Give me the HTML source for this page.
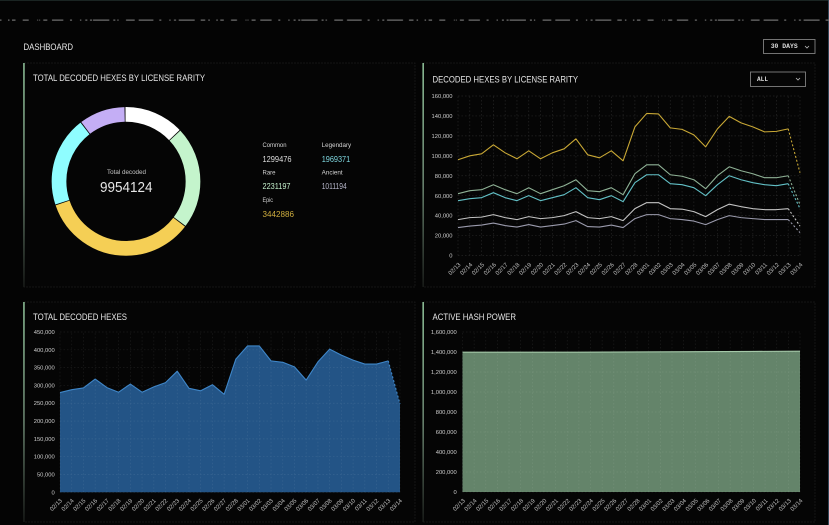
<!DOCTYPE html>
<html><head><meta charset="utf-8"><title>Dashboard</title>
<style>
html,body{margin:0;padding:0;background:#040404;width:829px;height:525px;overflow:hidden}
svg{display:block;filter:blur(.35px)}
text{font-family:"Liberation Sans",sans-serif}
.t{fill:#e6e6e6;font-size:9px}
.y{fill:#cfcfcf;font-size:5.800px;text-anchor:end}
.x{fill:#c4c4c4;font-size:5.900px;text-anchor:end}
.l{fill:#d4d4d4;font-size:6.200px}
.v{font-size:8.400px}
.g{fill:none;stroke:rgba(255,255,255,.13);stroke-width:.7;stroke-dasharray:1.5 2;vector-effect:non-scaling-stroke}
.s{fill:none;stroke-width:1.1;vector-effect:non-scaling-stroke;stroke-linejoin:round}
.d{stroke-dasharray:2 2}
</style></head><body>
<svg width="829" height="525" viewBox="0 0 829 525" xmlns="http://www.w3.org/2000/svg">
<defs>
<linearGradient id="a" x1="0" y1="0" x2="0" y2="1"><stop offset="0" stop-color="#a8e4b4"/><stop offset=".55" stop-color="#7d9c84"/><stop offset="1" stop-color="#1c1f1c"/></linearGradient>
<pattern id="dash" width="208.3" height="2" patternUnits="userSpaceOnUse" y="19.5">
<path fill="#6e6e6e" d="M0 0h1.500v1.200H0zM8 0h1.500v1.200H8zM12 0h3.500v1.200H12zM22.700 0h6v1.200h-6zM37.300 0h.8v1.200h-.8zM39.300 0h.8v1.200h-.8zM43.300 0h4v1.200h-4zM52 0h11.300v1.200H52zM70 0h2v1.200h-2zM80 0h1.300v1.200H80zM85.300 0h2v1.200h-2zM90 0h2v1.200h-2zM93 0h16.300v1.200H93zM113.300 0h2v1.200h-2zM117.300 0h1.300v1.200h-1.300zM126 0h8.700v1.200H126zM138.700 0h14.700v1.200h-14.700zM159.300 0h2v1.200h-2zM169.300 0h1.300v1.200h-1.300zM174 0h2v1.200h-2zM178.700 0h16v1.200h-16zM200.700 0h4.500v1.200h-4.500z"/>
</pattern>
</defs>
<rect width="829" height="525" fill="#040404"/>
<rect x="0" y="0" width="829" height="1" fill="#1a2422"/>
<rect x="828" y="0" width="1" height="525" fill="#33485a"/>
<rect x="0" y="19.500" width="829" height="2" fill="url(#dash)"/>

<text class="t" x="23.500" y="49.800" textLength="49.500" lengthAdjust="spacingAndGlyphs">DASHBOARD</text>

<rect x="763.500" y="39.500" width="51.500" height="14" fill="none" stroke="#808080" stroke-width=".9"/>
<text x="770.700" y="48.200" textLength="27" lengthAdjust="spacingAndGlyphs" style="font-family:'Liberation Mono',monospace;font-size:6.600px;font-weight:700;fill:#dcdcdc">30 DAYS</text>
<path d="M805 46l2 2 2-2" fill="none" stroke="#bbb" stroke-width=".8"/>

<rect x="24" y="63" width="391" height="224" fill="#050505" stroke="#1b1b1b" stroke-width=".8" stroke-dasharray="2 1"/>
<rect x="423" y="63" width="392" height="224" fill="#050505" stroke="#1b1b1b" stroke-width=".8" stroke-dasharray="2 1"/>
<rect x="24" y="302" width="391" height="220" fill="#050505" stroke="#1b1b1b" stroke-width=".8" stroke-dasharray="2 1"/>
<rect x="423" y="302" width="392" height="220" fill="#050505" stroke="#1b1b1b" stroke-width=".8" stroke-dasharray="2 1"/>
<rect x="23.300" y="63" width="1.300" height="224" fill="url(#a)"/>
<rect x="422.500" y="63" width="1.300" height="224" fill="url(#a)"/>
<rect x="23.300" y="302" width="1.300" height="220" fill="url(#a)"/>
<rect x="422.500" y="302" width="1.300" height="220" fill="url(#a)"/>

<text class="t" x="33" y="81" textLength="172" lengthAdjust="spacingAndGlyphs">TOTAL DECODED HEXES BY LICENSE RARITY</text>
<text class="t" x="432.500" y="82.300" textLength="145.500" lengthAdjust="spacingAndGlyphs">DECODED HEXES BY LICENSE RARITY</text>
<text class="t" x="33" y="320" textLength="94" lengthAdjust="spacingAndGlyphs">TOTAL DECODED HEXES</text>
<text class="t" x="432.500" y="320" textLength="83.500" lengthAdjust="spacingAndGlyphs">ACTIVE HASH POWER</text>

<rect x="750.500" y="72" width="55" height="14.500" fill="none" stroke="#808080" stroke-width=".9"/>
<text x="757" y="81" textLength="11" lengthAdjust="spacingAndGlyphs" style="font-family:'Liberation Mono',monospace;font-size:6.600px;font-weight:700;fill:#dcdcdc">ALL</text>
<path d="M796 78l2 2 2-2" fill="none" stroke="#bbb" stroke-width=".8"/>

<!-- donut -->
<g transform="rotate(-90 126 181.400)" fill="none" stroke-width="14.700">
<circle cx="126" cy="181.400" r="67" pathLength="100" stroke="#ffffff" stroke-dasharray="12.85 87.15" stroke-dashoffset="0"/>
<circle cx="126" cy="181.400" r="67" pathLength="100" stroke="#c4f4cc" stroke-dasharray="22.21 77.79" stroke-dashoffset="-13.05"/>
<circle cx="126" cy="181.400" r="67" pathLength="100" stroke="#f5cf55" stroke-dasharray="34.39 65.61" stroke-dashoffset="-35.46"/>
<circle cx="126" cy="181.400" r="67" pathLength="100" stroke="#8ffdff" stroke-dasharray="19.58 80.42" stroke-dashoffset="-70.05"/>
<circle cx="126" cy="181.400" r="67" pathLength="100" stroke="#c4aef5" stroke-dasharray="9.96 90.04" stroke-dashoffset="-89.83"/>
</g>
<text x="107" y="174" textLength="39" lengthAdjust="spacingAndGlyphs" style="font-size:6.200px;fill:#c4c4c4">Total decoded</text>
<text x="100" y="192" textLength="52.500" lengthAdjust="spacingAndGlyphs" style="font-size:15px;fill:#e6e6e6">9954124</text>

<text class="l" x="262.500" y="147.200" textLength="24" lengthAdjust="spacingAndGlyphs">Common</text>
<text class="v" x="262.500" y="161.800" textLength="29" lengthAdjust="spacingAndGlyphs" fill="#dedede">1299476</text>
<text class="l" x="262.500" y="174.500" textLength="13" lengthAdjust="spacingAndGlyphs">Rare</text>
<text class="v" x="262.500" y="189" textLength="28" lengthAdjust="spacingAndGlyphs" fill="#c4f0cc">2231197</text>
<text class="l" x="262.500" y="202.200" textLength="10.500" lengthAdjust="spacingAndGlyphs">Epic</text>
<text class="v" x="262.500" y="217" textLength="31.500" lengthAdjust="spacingAndGlyphs" fill="#cfae3f">3442886</text>
<text class="l" x="321.700" y="147.200" textLength="29.500" lengthAdjust="spacingAndGlyphs">Legendary</text>
<text class="v" x="321.700" y="161.800" textLength="28.500" lengthAdjust="spacingAndGlyphs" fill="#7fd8e0">1969371</text>
<text class="l" x="321.700" y="174.500" textLength="21" lengthAdjust="spacingAndGlyphs">Ancient</text>
<text class="v" x="321.700" y="189" textLength="25" lengthAdjust="spacingAndGlyphs" fill="#b5b5c8">1011194</text>

<!-- chart 2 -->
<g transform="translate(458,255.500) scale(11.793,-.997)">
<path class="g" d="M0 0V160M1 0V160M2 0V160M3 0V160M4 0V160M5 0V160M6 0V160M7 0V160M8 0V160M9 0V160M10 0V160M11 0V160M12 0V160M13 0V160M14 0V160M15 0V160M16 0V160M17 0V160M18 0V160M19 0V160M20 0V160M21 0V160M22 0V160M23 0V160M24 0V160M25 0V160M26 0V160M27 0V160M28 0V160M29 0V160M0 0H29M0 20H29M0 40H29M0 60H29M0 80H29M0 100H29M0 120H29M0 140H29M0 160H29"/>
<polyline class="s" stroke="#c9a835" points="0,96 1,100 2,102 3,111 4,103 5,97 6,105 7,97 8,103 9,107 10,117 11,101 12,98 13,105 14,95 15,129 16,142.500 17,142 18,128 19,126.500 20,121 21,109 22,127 23,139.500 24,133 25,129 26,124 27,124.500 28,127"/>
<polyline class="s d" stroke="#c9a835" points="28,127 29,83"/>
<polyline class="s" stroke="#8fb296" points="0,62 1,65 2,66 3,71 4,66 5,62 6,68 7,62 8,66 9,70 10,76 11,65 12,64 13,68 14,61 15,82 16,91 17,91 18,81 19,79.500 20,76 21,67 22,80 23,89 24,85 25,82 26,78 27,78 28,80"/>
<polyline class="s d" stroke="#8fb296" points="28,80 29,51"/>
<polyline class="s" stroke="#62c0c6" points="0,55 1,57 2,58 3,63 4,58 5,55 6,60 7,55 8,58 9,61 10,68 11,58 12,56 13,60 14,54 15,73 16,81 17,81 18,72 19,71 20,68 21,60 22,71 23,80 24,76 25,73 26,71 27,70 28,72"/>
<polyline class="s d" stroke="#62c0c6" points="28,72 29,47"/>
<polyline class="s" stroke="#c4c4c4" points="0,36 1,38 2,38.500 3,41 4,38 5,36 6,39 7,37 8,38 9,40 10,44 11,38 12,37 13,39 14,35 15,47 16,53 17,53 18,47 19,46.500 20,44 21,39 22,46 23,51.500 24,49 25,47 26,46 27,46 28,47"/>
<polyline class="s d" stroke="#c4c4c4" points="28,47 29,29.500"/>
<polyline class="s" stroke="#9a9aac" points="0,28 1,29.500 2,30.500 3,32.500 4,30 5,28.500 6,31 7,28.500 8,30 9,31.500 10,35 11,29 12,28.500 13,30.500 14,28 15,37 16,41 17,41 18,37 19,36 20,34.500 21,31 22,36 23,40 24,38 25,37 26,36 27,36 28,36"/>
<polyline class="s d" stroke="#9a9aac" points="28,36 29,23"/>
</g>
<text class="y" x="452.500" y="98">160,000</text>
<text class="y" x="452.500" y="118">140,000</text>
<text class="y" x="452.500" y="138">120,000</text>
<text class="y" x="452.500" y="158">100,000</text>
<text class="y" x="452.500" y="177.800">80,000</text>
<text class="y" x="452.500" y="197.800">60,000</text>
<text class="y" x="452.500" y="217.700">40,000</text>
<text class="y" x="452.500" y="237.700">20,000</text>
<text class="y" x="452.500" y="257.600">0</text>
<g>
<text class="x" transform="translate(461,265) rotate(-45)">02/13</text>
<text class="x" transform="translate(472.800,265) rotate(-45)">02/14</text>
<text class="x" transform="translate(484.600,265) rotate(-45)">02/15</text>
<text class="x" transform="translate(496.400,265) rotate(-45)">02/16</text>
<text class="x" transform="translate(508.200,265) rotate(-45)">02/17</text>
<text class="x" transform="translate(520,265) rotate(-45)">02/18</text>
<text class="x" transform="translate(531.800,265) rotate(-45)">02/19</text>
<text class="x" transform="translate(543.600,265) rotate(-45)">02/20</text>
<text class="x" transform="translate(555.300,265) rotate(-45)">02/21</text>
<text class="x" transform="translate(567.100,265) rotate(-45)">02/22</text>
<text class="x" transform="translate(578.900,265) rotate(-45)">02/23</text>
<text class="x" transform="translate(590.700,265) rotate(-45)">02/24</text>
<text class="x" transform="translate(602.500,265) rotate(-45)">02/25</text>
<text class="x" transform="translate(614.300,265) rotate(-45)">02/26</text>
<text class="x" transform="translate(626.100,265) rotate(-45)">02/27</text>
<text class="x" transform="translate(637.900,265) rotate(-45)">02/28</text>
<text class="x" transform="translate(649.700,265) rotate(-45)">03/01</text>
<text class="x" transform="translate(661.500,265) rotate(-45)">03/02</text>
<text class="x" transform="translate(673.300,265) rotate(-45)">03/03</text>
<text class="x" transform="translate(685.100,265) rotate(-45)">03/04</text>
<text class="x" transform="translate(696.900,265) rotate(-45)">03/05</text>
<text class="x" transform="translate(708.700,265) rotate(-45)">03/06</text>
<text class="x" transform="translate(720.400,265) rotate(-45)">03/07</text>
<text class="x" transform="translate(732.200,265) rotate(-45)">03/08</text>
<text class="x" transform="translate(744,265) rotate(-45)">03/09</text>
<text class="x" transform="translate(755.800,265) rotate(-45)">03/10</text>
<text class="x" transform="translate(767.600,265) rotate(-45)">03/11</text>
<text class="x" transform="translate(779.400,265) rotate(-45)">03/12</text>
<text class="x" transform="translate(791.200,265) rotate(-45)">03/13</text>
<text class="x" transform="translate(803,265) rotate(-45)">03/14</text>
</g>

<!-- chart 3 -->
<g transform="translate(60,492.300) scale(11.724,-.3562)">
<polygon fill="#235486" points="0,0 0,280 1,288 2,293 3,318 4,294 5,281 6,304 7,281 8,296 9,308 10,340 11,292 12,285 13,302 14,275 15,374 16,411 17,411 18,369 19,365 20,352 21,315 22,366 23,402 24,385 25,371 26,360 27,360 28,369 29,248 29,0"/>
<path class="g" d="M0 0V450M1 0V450M2 0V450M3 0V450M4 0V450M5 0V450M6 0V450M7 0V450M8 0V450M9 0V450M10 0V450M11 0V450M12 0V450M13 0V450M14 0V450M15 0V450M16 0V450M17 0V450M18 0V450M19 0V450M20 0V450M21 0V450M22 0V450M23 0V450M24 0V450M25 0V450M26 0V450M27 0V450M28 0V450M29 0V450M0 0H29M0 50H29M0 100H29M0 150H29M0 200H29M0 250H29M0 300H29M0 350H29M0 400H29M0 450H29" style="stroke:rgba(255,255,255,.09)"/>
<polyline class="s" stroke="#3f86c8" points="0,280 1,288 2,293 3,318 4,294 5,281 6,304 7,281 8,296 9,308 10,340 11,292 12,285 13,302 14,275 15,374 16,411 17,411 18,369 19,365 20,352 21,315 22,366 23,402 24,385 25,371 26,360 27,360 28,369"/>
<polyline class="s d" stroke="#3f86c8" points="28,369 29,248"/>
</g>
<text class="y" x="54.700" y="334">450,000</text>
<text class="y" x="54.700" y="351.800">400,000</text>
<text class="y" x="54.700" y="369.600">350,000</text>
<text class="y" x="54.700" y="387.400">300,000</text>
<text class="y" x="54.700" y="405.200">250,000</text>
<text class="y" x="54.700" y="423">200,000</text>
<text class="y" x="54.700" y="440.900">150,000</text>
<text class="y" x="54.700" y="458.700">100,000</text>
<text class="y" x="54.700" y="476.500">50,000</text>
<text class="y" x="54.700" y="494.300">0</text>
<g>
<text class="x" transform="translate(62.500,501) rotate(-45)">02/13</text>
<text class="x" transform="translate(74.200,501) rotate(-45)">02/14</text>
<text class="x" transform="translate(85.900,501) rotate(-45)">02/15</text>
<text class="x" transform="translate(97.700,501) rotate(-45)">02/16</text>
<text class="x" transform="translate(109.400,501) rotate(-45)">02/17</text>
<text class="x" transform="translate(121.100,501) rotate(-45)">02/18</text>
<text class="x" transform="translate(132.800,501) rotate(-45)">02/19</text>
<text class="x" transform="translate(144.600,501) rotate(-45)">02/20</text>
<text class="x" transform="translate(156.300,501) rotate(-45)">02/21</text>
<text class="x" transform="translate(168,501) rotate(-45)">02/22</text>
<text class="x" transform="translate(179.700,501) rotate(-45)">02/23</text>
<text class="x" transform="translate(191.500,501) rotate(-45)">02/24</text>
<text class="x" transform="translate(203.200,501) rotate(-45)">02/25</text>
<text class="x" transform="translate(214.900,501) rotate(-45)">02/26</text>
<text class="x" transform="translate(226.600,501) rotate(-45)">02/27</text>
<text class="x" transform="translate(238.400,501) rotate(-45)">02/28</text>
<text class="x" transform="translate(250.100,501) rotate(-45)">03/01</text>
<text class="x" transform="translate(261.800,501) rotate(-45)">03/02</text>
<text class="x" transform="translate(273.500,501) rotate(-45)">03/03</text>
<text class="x" transform="translate(285.300,501) rotate(-45)">03/04</text>
<text class="x" transform="translate(297,501) rotate(-45)">03/05</text>
<text class="x" transform="translate(308.700,501) rotate(-45)">03/06</text>
<text class="x" transform="translate(320.400,501) rotate(-45)">03/07</text>
<text class="x" transform="translate(332.200,501) rotate(-45)">03/08</text>
<text class="x" transform="translate(343.900,501) rotate(-45)">03/09</text>
<text class="x" transform="translate(355.600,501) rotate(-45)">03/10</text>
<text class="x" transform="translate(367.300,501) rotate(-45)">03/11</text>
<text class="x" transform="translate(379.100,501) rotate(-45)">03/12</text>
<text class="x" transform="translate(390.800,501) rotate(-45)">03/13</text>
<text class="x" transform="translate(402.500,501) rotate(-45)">03/14</text>
</g>

<!-- chart 4 -->
<g transform="translate(462.500,492) scale(11.638,-.1)">
<polygon fill="#64846a" points="0,0 0,1398 10,1398 15,1401 20,1403 25,1406 29,1408 29,0"/>
<path class="g" d="M0 0V1600M1 0V1600M2 0V1600M3 0V1600M4 0V1600M5 0V1600M6 0V1600M7 0V1600M8 0V1600M9 0V1600M10 0V1600M11 0V1600M12 0V1600M13 0V1600M14 0V1600M15 0V1600M16 0V1600M17 0V1600M18 0V1600M19 0V1600M20 0V1600M21 0V1600M22 0V1600M23 0V1600M24 0V1600M25 0V1600M26 0V1600M27 0V1600M28 0V1600M29 0V1600M0 0H29M0 200H29M0 400H29M0 600H29M0 800H29M0 1000H29M0 1200H29M0 1400H29M0 1600H29" style="stroke:rgba(255,255,255,.09)"/>
<polyline class="s" stroke="#a4c8a8" points="0,1398 10,1398 15,1401 20,1403 25,1406 29,1408"/>
</g>
<text class="y" x="456.700" y="334">1,600,000</text>
<text class="y" x="456.700" y="354">1,400,000</text>
<text class="y" x="456.700" y="374">1,200,000</text>
<text class="y" x="456.700" y="394">1,000,000</text>
<text class="y" x="456.700" y="414">800,000</text>
<text class="y" x="456.700" y="434">600,000</text>
<text class="y" x="456.700" y="454">400,000</text>
<text class="y" x="456.700" y="474">200,000</text>
<text class="y" x="456.700" y="494">0</text>
<g>
<text class="x" transform="translate(465.500,501) rotate(-45)">02/13</text>
<text class="x" transform="translate(477.100,501) rotate(-45)">02/14</text>
<text class="x" transform="translate(488.800,501) rotate(-45)">02/15</text>
<text class="x" transform="translate(500.400,501) rotate(-45)">02/16</text>
<text class="x" transform="translate(512.100,501) rotate(-45)">02/17</text>
<text class="x" transform="translate(523.700,501) rotate(-45)">02/18</text>
<text class="x" transform="translate(535.300,501) rotate(-45)">02/19</text>
<text class="x" transform="translate(547,501) rotate(-45)">02/20</text>
<text class="x" transform="translate(558.600,501) rotate(-45)">02/21</text>
<text class="x" transform="translate(570.200,501) rotate(-45)">02/22</text>
<text class="x" transform="translate(581.900,501) rotate(-45)">02/23</text>
<text class="x" transform="translate(593.500,501) rotate(-45)">02/24</text>
<text class="x" transform="translate(605.200,501) rotate(-45)">02/25</text>
<text class="x" transform="translate(616.800,501) rotate(-45)">02/26</text>
<text class="x" transform="translate(628.400,501) rotate(-45)">02/27</text>
<text class="x" transform="translate(640.100,501) rotate(-45)">02/28</text>
<text class="x" transform="translate(651.700,501) rotate(-45)">03/01</text>
<text class="x" transform="translate(663.300,501) rotate(-45)">03/02</text>
<text class="x" transform="translate(675,501) rotate(-45)">03/03</text>
<text class="x" transform="translate(686.600,501) rotate(-45)">03/04</text>
<text class="x" transform="translate(698.300,501) rotate(-45)">03/05</text>
<text class="x" transform="translate(709.900,501) rotate(-45)">03/06</text>
<text class="x" transform="translate(721.500,501) rotate(-45)">03/07</text>
<text class="x" transform="translate(733.200,501) rotate(-45)">03/08</text>
<text class="x" transform="translate(744.800,501) rotate(-45)">03/09</text>
<text class="x" transform="translate(756.400,501) rotate(-45)">03/10</text>
<text class="x" transform="translate(768.100,501) rotate(-45)">03/11</text>
<text class="x" transform="translate(779.700,501) rotate(-45)">03/12</text>
<text class="x" transform="translate(791.400,501) rotate(-45)">03/13</text>
<text class="x" transform="translate(803,501) rotate(-45)">03/14</text>
</g>
</svg>
</body></html>
